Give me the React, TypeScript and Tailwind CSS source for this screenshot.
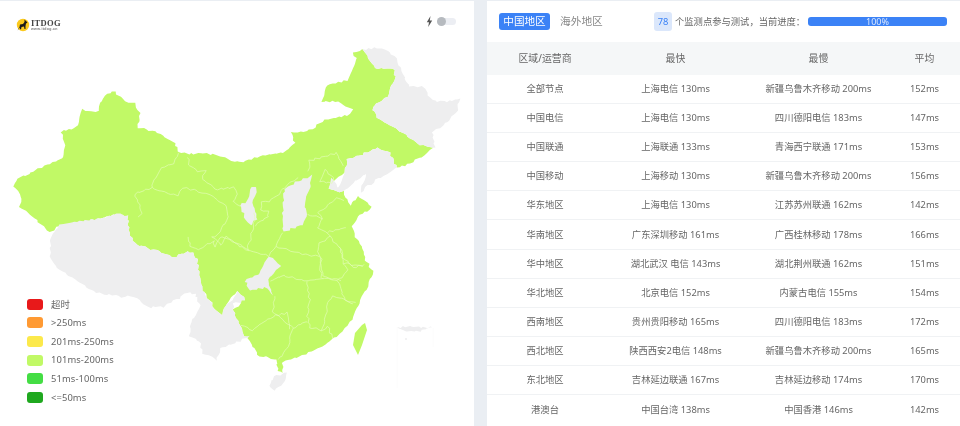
const GREEN = "#c1f966";
const GRAY = "#eeeeef";

const greenMain =
  "M13,187 L17,178 L26,175 L36,170 L50,163 L61,159 L65,148 L61,132 L74,128 L77,125 L82,110 L98,112 L102,98 L110,93 L115,91 L120,98 L135,104 L140,113 L138,128 L160,133 L175,143 L179,153 L213,154 L240,163 L263,156 L283,153 L295,143 L291,132 L307,132 L325,120 L350,114 L352,110 L338,102 L321,102 L327,85 L347,80 L357,60 L353,53 L363,50 L370,60 L375,69 L393,68 L395,77 L387,97 L372,107 L377,117 L403,133 L420,145 L433,148 L422,157 L410,163 L397,168 L390,153 L378,147 L362,155 L347,160 L345,172 L335,180 L328,188 L337,192 L343,192 L350,205 L358,197 L365,202 L372,208 L360,215 L352,227 L355,237 L362,246 L365,260 L373,271 L368,286 L360,300 L352,320 L337,336 L320,348 L300,356 L283,361 L283,373 L278,371 L277,360 L257,355 L253,346 L245,335 L240,326 L233,310 L240,303 L245,300 L237,291 L228,303 L222,315 L213,306 L203,290 L197,260 L193,253 L187,252 L173,258 L160,251 L137,245 L130,236 L128,216 L113,215 L77,223 L58,226 L50,233 L43,226 L30,215 L20,208 L22,197 Z";

const grayShapes = [
  "M363,50 L377,48 L390,52 L398,62 L405,80 L410,86 L423,87 L432,100 L447,102 L460,98 L457,110 L448,122 L433,132 L435,147 L433,148 L420,145 L403,133 L377,117 L372,107 L387,97 L395,77 L393,68 L375,69 L370,60 Z",
  "M347,160 L362,155 L378,147 L390,153 L397,168 L373,182 L361,192 L367,173 L353,183 L343,192 L337,192 L345,172 Z",
  "M332,178 L337,186 L343,192 L337,192 L328,188 Z",
  "M50,237 L60,225 L77,222 L103,218 L117,214 L128,216 L130,236 L137,245 L160,251 L173,258 L187,252 L193,253 L197,260 L203,290 L199,294 L187,293 L163,307 L150,307 L128,295 L125,297 L97,293 L77,282 L57,268 L50,257 Z",
  "M202,290 L213,306 L222,315 L228,303 L233,300 L233,310 L240,326 L245,335 L250,336 L240,341 L220,348 L217,361 L203,353 L200,341 L190,335 L192,320 L200,306 L195,293 Z",
  "M237,291 L245,300 L240,303 L233,303 Z",
  "M270,256 L280,266 L268,280 L273,295 L265,288 L250,291 L245,281 L260,273 L265,263 Z",
  "M252,187 L257,187 L253,203 L257,220 L250,225 L245,220 L240,205 L247,202 Z",
  "M285,188 L312,175 L310,185 L305,203 L307,213 L303,225 L283,232 L282,213 Z",
  "M270,383 L277,375 L287,373 L283,383 L275,391 L270,388 Z",
  "M397,327 L433,327 L420,331 L405,332 Z",
];

const taiwan = "M365,323 L367,330 L362,345 L358,355 L353,345 L355,333 L362,325 Z";

const lines = [
  "M178,153 L173,163 L162,168 L153,183 L152,188 L140,192 L135,194 L142,213 L139,216",
  "M188,157 L190,167 L198,172 L205,170 L203,180 L215,190 L233,187 L237,193 L232,202 L240,205",
  "M152,188 L165,193 L177,195 L183,188 L197,190 L210,195 L227,208 L228,218 L220,233 L212,237 L222,245 L227,237 L240,247 L250,250",
  "M188,238 L190,246 L198,250 L213,241 L215,246 L223,236 L238,245 L257,253 L270,256",
  "M255,225 L268,217 L268,212 L260,210 L262,202 L272,200 L287,185 L297,178",
  "M255,213 L253,226 L250,240 L248,250",
  "M283,233 L277,246 L270,256",
  "M277,246 L297,253 L320,256",
  "M310,160 L337,153 L343,167",
  "M310,160 L308,170",
  "M320,182 L325,170 L333,177 L332,183 L320,182",
  "M307,215 L322,218 L318,213 L337,198 L343,200",
  "M322,218 L317,228 L327,232 L347,227",
  "M327,232 L330,237 L320,243 L317,250 L322,260 L320,267 L323,280",
  "M330,237 L340,247 L343,257 L353,268 L365,265",
  "M340,246 L343,263 L362,266",
  "M343,263 L348,270 L338,281 L345,300 L355,303",
  "M320,256 L323,276 L340,281",
  "M270,281 L283,276 L305,281 L325,278 L338,281",
  "M307,281 L310,300 L307,316 L310,328 L322,330 L328,303 L333,296 L353,303",
  "M322,330 L328,326 L332,338",
  "M275,296 L273,313 L290,326 L293,328 L308,321",
  "M242,326 L252,330 L273,316 L287,313 L290,328",
  "M293,328 L288,346 L278,360",
];

// Same wobble for every shape, so shared borders stay shared and look like traced borders.
function wobble(d: string) {
  const closed = d.trim().endsWith("Z");
  const pts = (d.match(/-?\d+(\.\d+)?,-?\d+(\.\d+)?/g) ?? []).map((p) => p.split(",").map(Number));
  if (closed) pts.push(pts[0]);
  const shift = (x: number, y: number) => [
    x + 0.8 * Math.sin(x * 1.37 + y * 0.83) + 0.5 * Math.sin(y * 2.1 - x * 0.6),
    y + 0.8 * Math.sin(y * 1.29 - x * 0.91) + 0.5 * Math.sin(x * 2.3 + y * 0.5),
  ];
  const out: string[] = [];
  for (let i = 0; i < pts.length - 1; i++) {
    const [x0, y0] = pts[i];
    const [x1, y1] = pts[i + 1];
    const n = Math.max(1, Math.round(Math.hypot(x1 - x0, y1 - y0) / 3));
    for (let k = 0; k < n; k++) {
      const [x, y] = shift(x0 + ((x1 - x0) * k) / n, y0 + ((y1 - y0) * k) / n);
      out.push(`${x.toFixed(1)},${y.toFixed(1)}`);
    }
  }
  if (!closed) {
    const [x, y] = shift(pts[pts.length - 1][0], pts[pts.length - 1][1]);
    out.push(`${x.toFixed(1)},${y.toFixed(1)}`);
  }
  return "M" + out.join(" L") + (closed ? " Z" : "");
}

const legend = [
  ["超时", "#e8191a"],
  [">250ms", "#ff9a33"],
  ["201ms-250ms", "#fce94b"],
  ["101ms-200ms", "#c1f966"],
  ["51ms-100ms", "#44dd44"],
  ["<=50ms", "#1fa81f"],
];

const rows = [
  ["全部节点", "上海电信 130ms", "新疆乌鲁木齐移动 200ms", "152ms"],
  ["中国电信", "上海电信 130ms", "四川德阳电信 183ms", "147ms"],
  ["中国联通", "上海联通 133ms", "青海西宁联通 171ms", "153ms"],
  ["中国移动", "上海移动 130ms", "新疆乌鲁木齐移动 200ms", "156ms"],
  ["华东地区", "上海电信 130ms", "江苏苏州联通 162ms", "142ms"],
  ["华南地区", "广东深圳移动 161ms", "广西桂林移动 178ms", "166ms"],
  ["华中地区", "湖北武汉 电信 143ms", "湖北荆州联通 162ms", "151ms"],
  ["华北地区", "北京电信 152ms", "内蒙古电信 155ms", "154ms"],
  ["西南地区", "贵州贵阳移动 165ms", "四川德阳电信 183ms", "172ms"],
  ["西北地区", "陕西西安2电信 148ms", "新疆乌鲁木齐移动 200ms", "165ms"],
  ["东北地区", "吉林延边联通 167ms", "吉林延边移动 174ms", "170ms"],
  ["港澳台", "中国台湾 138ms", "中国香港 146ms", "142ms"],
];

function Logo() {
  return (
    <div className="mt-px flex items-center gap-px">
      <svg width="14" height="14" viewBox="0 0 14 14">
        <circle cx="7" cy="7" r="6.2" fill="#fbc91d" />
        <path
          d="M1.5,12.5 L3.5,9 L4,6.5 L7,6 L8.5,4 L8.5,1.5 L10,3 L11.5,4.5 L10,5.5 L9.5,8 L9.5,11 L8.5,11 L8,8.5 L5.5,9 L5,11.5 L4,11 L4,9.5 Z"
          fill="#1a1a1a"
        />
      </svg>
      <div className="flex flex-col leading-none">
        <span className="font-['Liberation_Serif',serif] text-[8.5px] font-bold leading-[8px] tracking-[0.3px] text-[#444]">
          ITDOG
        </span>
        <span className="font-['Liberation_Sans',sans-serif] text-[3.5px] font-bold leading-[4px] tracking-[0.35px] text-[#777]">
          www.itdog.cn
        </span>
      </div>
    </div>
  );
}

function ChinaMap() {
  return (
    <svg className="absolute left-0 top-0" width="474" height="425" viewBox="0 1 474 425">
      <path d={wobble(greenMain)} fill={GREEN} />
      {grayShapes.map((d, i) => (
        <path key={i} d={wobble(d)} fill={GRAY} />
      ))}
      <path d={taiwan} fill={GREEN} />
      <path d="M397,327 L397,388 M433,328 L433,347" stroke="#fcfcfc" fill="none" />
      <circle cx="406" cy="339" r="1" fill={GRAY} />
      {lines.map((d, i) => (
        <path key={i} d={wobble(d)} fill="none" stroke="#e3fcb6" strokeWidth="0.7" />
      ))}
    </svg>
  );
}

export default function App() {
  return (
    <div className="flex h-[426px] w-[960px] gap-[13px] overflow-hidden bg-[#eaeef3] pt-px font-['Noto_Sans','Noto_Sans_CJK_SC',sans-serif] text-[#666] blur-[0.3px]">
      <section className="relative flex w-[474px] flex-col justify-between bg-white pb-[23px] pl-[27px] pr-[18px] pt-[16px]">
        <ChinaMap />
        <header className="relative ml-[-11px] flex items-start justify-between">
          <Logo />
          <div className="mt-[-1px] flex items-center gap-[4px]">
            <svg width="7" height="11" viewBox="0 0 7 11">
              <path d="M4.5,0 L0.8,6.2 L3,6.2 L2.2,11 L6.2,4.4 L3.8,4.4 Z" fill="#555" />
            </svg>
            <div className="relative h-[7px] w-[19px] rounded-full bg-[#eceef3]">
              <span className="absolute left-0 top-[-1px] h-[9px] w-[9px] rounded-full bg-[#b6babf]" />
            </div>
          </div>
        </header>
        <ul className="relative flex flex-col gap-[7.67px]">
          {legend.map(([label, color]) => (
            <li key={label} className="flex h-[11px] items-center gap-[8px]">
              <span className="h-[11px] w-[16px] rounded-[3px]" style={{ backgroundColor: color }} />
              <span className="text-[9.4px] leading-none tracking-[0.1px] text-[#666]">{label}</span>
            </li>
          ))}
        </ul>
      </section>

      <section className="flex min-w-0 flex-1 flex-col bg-white">
        <div className="flex h-[41px] items-center pl-[12px] pr-[13px]">
          <span className="flex h-[17px] w-[51px] items-center justify-center rounded-[3px] bg-[#3b82f6] text-[10.6px] text-white">
            中国地区
          </span>
          <span className="ml-[10px] w-[43px] whitespace-nowrap text-[10.7px] text-[#888]">海外地区</span>
          <span className="ml-[51px] flex h-[19px] w-[18px] items-center justify-center rounded-[3px] bg-[#dbe7fb] text-[9.3px] text-[#3b82f6]">
            78
          </span>
          <span className="ml-[3px] w-[133px] whitespace-nowrap text-[9.3px] text-[#666]">个监测点参与测试，当前进度：</span>
          <div className="flex h-[9px] flex-1 items-center justify-center rounded-[3px] bg-[#3b82f6] text-[9px] leading-none text-[#dce8fd]">
            100%
          </div>
        </div>
        <div className="grid h-[33px] grid-cols-[116px_145px_141px_71px] items-center bg-[#f5f7f8] text-center text-[9.9px] text-[#666]">
          <span>区域/运营商</span>
          <span>最快</span>
          <span>最慢</span>
          <span>平均</span>
        </div>
        {rows.map((r) => (
          <div
            key={r[0]}
            className="grid h-[29.1px] shrink-0 grid-cols-[116px_145px_141px_71px] items-center border-b border-[#f0f2f4] text-center text-[9.3px] text-[#666] last:border-b-0"
          >
            {r.map((c, i) => (
              <span key={i}>{c}</span>
            ))}
          </div>
        ))}
      </section>
    </div>
  );
}
